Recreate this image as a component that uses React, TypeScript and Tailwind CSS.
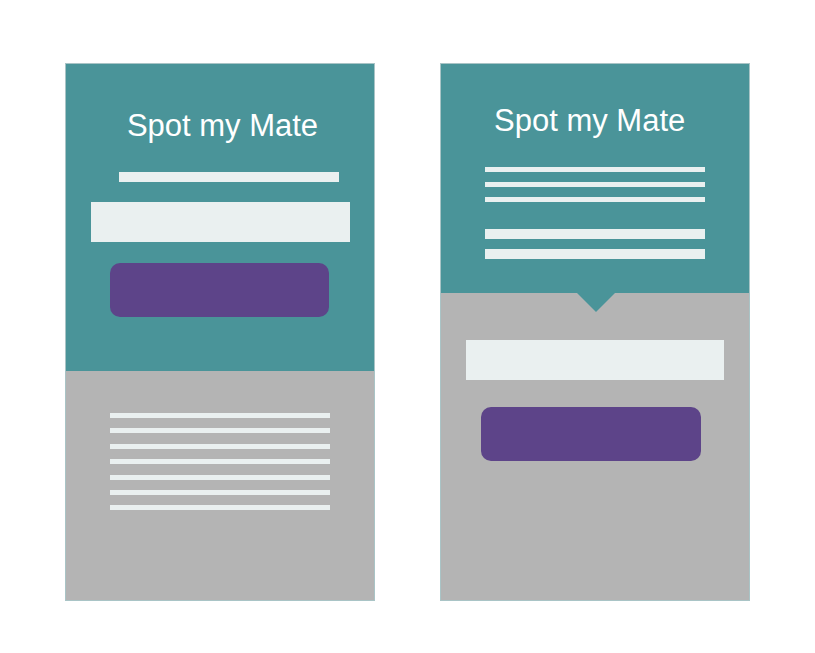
export default function App() {
  const font = { fontFamily: '"Liberation Sans", Arial, sans-serif' };

  return (
    <div className="w-[815px] h-[653px] bg-white flex gap-[65px] pl-[65px] pt-[63px]">
      {/* left mockup */}
      <div className="w-[310px] h-[538px] flex flex-col border border-[#a9c4c6]">
        <div className="h-[307px] bg-[#4a9499] flex flex-col pt-[46px]">
          <h1
            className="text-[31px] leading-[31px] text-white text-center pl-[5px]"
            style={font}
          >
            Spot my Mate
          </h1>
          <div className="ml-[53px] mt-[31px] w-[220px] h-[10px] bg-[#eaf0f0]" />
          <div className="ml-[25px] mt-[20px] w-[259px] h-[40px] bg-[#eaf0f0]" />
          <div className="ml-[44px] mt-[21px] w-[219px] h-[54px] rounded-[10px] bg-[#5d4489]" />
        </div>
        <div className="flex-1 bg-[#b4b4b4] flex flex-col gap-[10.4px] pt-[42px] pl-[44px]">
          {Array.from({ length: 7 }).map((_, i) => (
            <div key={i} className="w-[220px] h-[5px] bg-[#eaf0f0]" />
          ))}
        </div>
      </div>

      {/* right mockup */}
      <div className="w-[310px] h-[538px] flex flex-col border border-[#a9c4c6]">
        <div className="relative h-[229px] bg-[#4a9499] flex flex-col pt-[41px]">
          <h1
            className="text-[31px] leading-[31px] text-white pl-[53px]"
            style={font}
          >
            Spot my Mate
          </h1>
          <div className="ml-[44px] mt-[31px] flex flex-col gap-[10px]">
            <div className="w-[220px] h-[5px] bg-[#eaf0f0]" />
            <div className="w-[220px] h-[5px] bg-[#eaf0f0]" />
            <div className="w-[220px] h-[5px] bg-[#eaf0f0]" />
          </div>
          <div className="ml-[44px] mt-[27px] flex flex-col gap-[10px]">
            <div className="w-[220px] h-[10px] bg-[#eaf0f0]" />
            <div className="w-[220px] h-[10px] bg-[#eaf0f0]" />
          </div>
          <div className="absolute left-[136px] top-full w-0 h-0 border-l-[19px] border-r-[19px] border-t-[19px] border-l-transparent border-r-transparent border-t-[#4a9499]" />
        </div>
        <div className="flex-1 bg-[#b4b4b4] flex flex-col pt-[47px]">
          <div className="ml-[25px] w-[258px] h-[40px] bg-[#eaf0f0]" />
          <div className="ml-[40px] mt-[27px] w-[220px] h-[54px] rounded-[10px] bg-[#5d4489]" />
        </div>
      </div>
    </div>
  );
}
